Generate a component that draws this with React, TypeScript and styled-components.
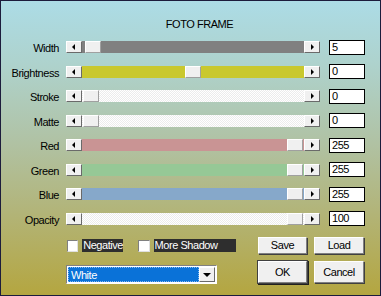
import React from "react";
import styled, { createGlobalStyle } from "styled-components";

const Global = createGlobalStyle`
  html, body { margin: 0; padding: 0; }
  body { font-family: "Liberation Sans", Arial, sans-serif; font-size: 11px; letter-spacing: -0.45px; }
`;

const Frame = styled.div`
  box-sizing: border-box;
  width: 381px;
  height: 296px;
  border: 1px solid #1c1c3c;
  background: linear-gradient(to bottom, #acdce6 0%, #aed2cc 22%, #b0c2a4 48%, #b2b478 72%, #b4a640 100%);
  display: flex;
  flex-direction: column;
  color: #000;
`;

const Title = styled.div`
  box-sizing: border-box;
  height: 34px;
  padding-top: 17px;
  line-height: 13px;
  text-align: center;
  padding-left: 18px;
`;

const Rows = styled.div`
  display: flex;
  flex-direction: column;
`;

const Row = styled.div`
  height: 24.5px;
  display: flex;
  align-items: center;
`;

const Label = styled.div`
  width: 58px;
  margin-right: 7px;
  text-align: right;
  line-height: 13px;
  padding-top: 3px;
`;

const Scroll = styled.div`
  width: 254px;
  height: 12px;
  display: flex;
`;

const ArrowBtn = styled.div`
  box-sizing: border-box;
  width: 16px;
  height: 12px;
  background: #f0f0f0;
  border-style: solid;
  border-width: 1px;
  border-color: #ffffff #6a6a6a #6a6a6a #ffffff;
  display: flex;
  align-items: center;
  justify-content: center;
`;

const Tri = styled.span<{ $dir: "left" | "right" | "down" }>`
  width: 0;
  height: 0;
  ${(p) =>
    p.$dir === "left"
      ? "border-right: 3px solid #000; border-top: 3px solid transparent; border-bottom: 3px solid transparent; margin-left: -1px;"
      : p.$dir === "right"
      ? "border-left: 3px solid #000; border-top: 3px solid transparent; border-bottom: 3px solid transparent; margin-left: 1px;"
      : "border-top: 4px solid #000; border-left: 4px solid transparent; border-right: 4px solid transparent; margin-top: 1px;"}
`;

const Track = styled.div<{ $fill: string }>`
  flex: 1;
  position: relative;
  background: ${(p) => p.$fill};
`;

const Thumb = styled.div`
  position: absolute;
  top: 0;
  box-sizing: border-box;
  width: 16px;
  height: 12px;
  background: #f0f0f0;
  border-style: solid;
  border-width: 1px;
  border-color: #ffffff #a0a0a0 #a0a0a0 #ffffff;
`;

const Edit = styled.div`
  box-sizing: border-box;
  width: 36px;
  height: 15px;
  margin-left: 9px;
  background: #fff;
  border: 1px solid #000;
  padding-left: 2px;
  line-height: 13px;
`;

const Bottom = styled.div`
  display: grid;
  grid-template-columns: 185px 49px 50px;
  grid-template-rows: 17px 22px;
  column-gap: 7px;
  row-gap: 7px;
  padding-left: 65px;
  margin-top: 6px;
`;

const Checks = styled.div`
  display: flex;
  align-items: center;
  padding-left: 1px;
`;

const Box = styled.span`
  box-sizing: border-box;
  width: 12px;
  height: 12px;
  background: #fff;
  border-style: solid;
  border-width: 1px;
  border-color: #808080 #e0e0e0 #e0e0e0 #808080;
  margin-right: 4px;
`;

const CheckText = styled.span<{ $w: number }>`
  box-sizing: border-box;
  width: ${(p) => p.$w}px;
  height: 13px;
  line-height: 13px;
  background: #2e2e2e;
  color: #fff;
  padding-left: 1px;
  margin-right: 15px;
  white-space: nowrap;
`;

const Button = styled.button<{ $def?: boolean }>`
  box-sizing: border-box;
  width: 100%;
  height: 100%;
  margin: 0;
  padding: 0;
  font: inherit;
  letter-spacing: inherit;
  color: #000;
  background: #f0f0f0;
  border-style: solid;
  border-width: 1px;
  border-color: #ffffff #808080 #808080 #ffffff;
  box-shadow: ${(p) => (p.$def ? "0 0 0 1px #404040, 1px 1px 0 1px #202020" : "1px 1px 0 0 #404040")};
  line-height: 13px;
`;

const Combo = styled.div`
  box-sizing: border-box;
  width: 151px;
  height: 19px;
  margin-top: 4px;
  display: flex;
  border-style: solid;
  border-width: 1px;
  border-color: #808080 #ffffff #ffffff #808080;
  background: #fff;
  padding: 1px;
`;

const ComboField = styled.div`
  flex: 1;
  background: #0a72d8;
  color: #fff;
  line-height: 15px;
  padding-left: 2px;
  border: 1px dotted #88bbee;
`;

const ComboBtn = styled.div`
  box-sizing: border-box;
  width: 16px;
  background: #f0f0f0;
  border-style: solid;
  border-width: 1px;
  border-color: #ffffff #6a6a6a #6a6a6a #ffffff;
  display: flex;
  align-items: center;
  justify-content: center;
`;

const WHITE_DITHER = "repeating-conic-gradient(#ececec 0 25%, #ffffff 0 50%) 0 0 / 2px 2px";

type Slider = { label: string; value: string; fill: string; pos: number };

const sliders: Slider[] = [
  { label: "Width", value: "5", fill: "#808080", pos: 3 },
  { label: "Brightness", value: "0", fill: "#c9c82e", pos: 103 },
  { label: "Stroke", value: "0", fill: WHITE_DITHER, pos: 1 },
  { label: "Matte", value: "0", fill: WHITE_DITHER, pos: 1 },
  { label: "Red", value: "255", fill: "#c99494", pos: 205 },
  { label: "Green", value: "255", fill: "#96c896", pos: 205 },
  { label: "Blue", value: "255", fill: "#86a8ca", pos: 205 },
  { label: "Opacity", value: "100", fill: WHITE_DITHER, pos: 205 },
];

export default function App() {
  return (
    <>
      <Global />
      <Frame>
        <Title>FOTO FRAME</Title>
        <Rows>
          {sliders.map((s) => (
            <Row key={s.label}>
              <Label>{s.label}</Label>
              <Scroll>
                <ArrowBtn>
                  <Tri $dir="left" />
                </ArrowBtn>
                <Track $fill={s.fill}>
                  <Thumb style={{ left: s.pos }} />
                </Track>
                <ArrowBtn>
                  <Tri $dir="right" />
                </ArrowBtn>
              </Scroll>
              <Edit>{s.value}</Edit>
            </Row>
          ))}
        </Rows>
        <Bottom>
          <Checks>
            <Box />
            <CheckText $w={45}>Negative</CheckText>
            <Box />
            <CheckText $w={90}>More Shadow</CheckText>
          </Checks>
          <Button>Save</Button>
          <Button>Load</Button>
          <Combo>
            <ComboField>White</ComboField>
            <ComboBtn>
              <Tri $dir="down" />
            </ComboBtn>
          </Combo>
          <Button $def>OK</Button>
          <Button>Cancel</Button>
        </Bottom>
      </Frame>
    </>
  );
}
